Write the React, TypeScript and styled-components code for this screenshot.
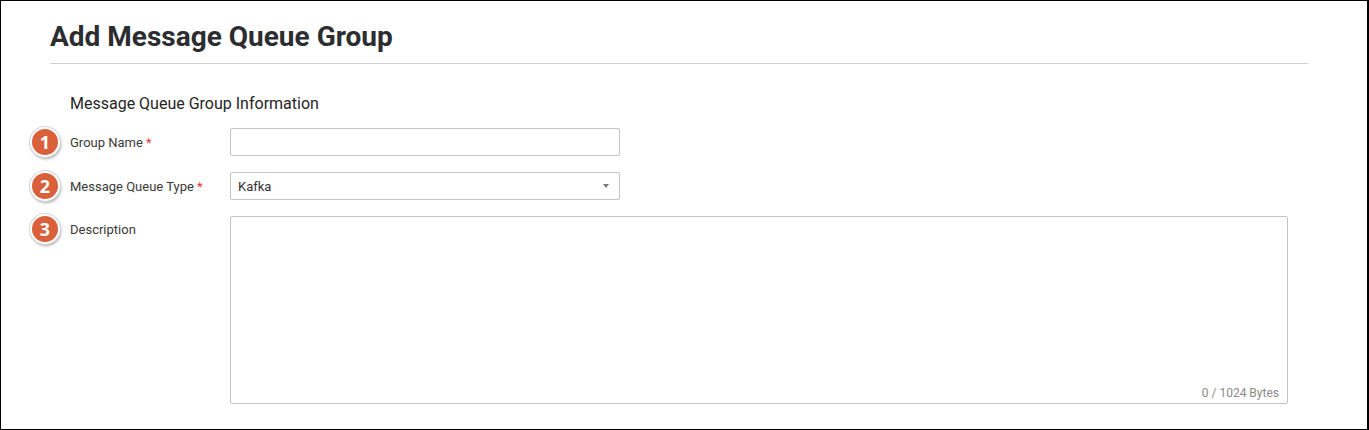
import styled, { createGlobalStyle } from 'styled-components'

const GlobalStyle = createGlobalStyle`
  html, body {
    margin: 0;
    padding: 0;
    background: #fff;
  }
  body {
    font-family: Roboto, "Liberation Sans", Arial, sans-serif;
    color: #333;
  }
`

const App: React.FC = () => {
  return (
    <>
      <GlobalStyle />
      <Frame>
        <Header>
          <Title>Add Message Queue Group</Title>
        </Header>
        <Section>
          <SectionTitle>Message Queue Group Information</SectionTitle>
          <Form>
            <Row>
              <LabelCell>
                <Badge>1</Badge>
                <Label>
                  Group Name <Req>*</Req>
                </Label>
              </LabelCell>
              <Input type="text" />
            </Row>
            <Row>
              <LabelCell>
                <Badge>2</Badge>
                <Label>
                  Message Queue Type <Req>*</Req>
                </Label>
              </LabelCell>
              <Select>
                <span>Kafka</span>
                <Caret />
              </Select>
            </Row>
            <Row>
              <LabelCell $top>
                <Badge>3</Badge>
                <Label>Description</Label>
              </LabelCell>
              <TextAreaWrap>
                <TextArea />
                <Counter>0 / 1024 Bytes</Counter>
              </TextAreaWrap>
            </Row>
          </Form>
        </Section>
      </Frame>
    </>
  )
}

export default App

const Frame = styled.div`
  width: 1369px;
  height: 430px;
  box-sizing: border-box;
  border: 1px solid #000;
  border-right-width: 2px;
  background: #fff;
  overflow: hidden;
`

const Header = styled.div`
  margin: 0 59px 0 49px;
  padding-top: 20px;
  padding-bottom: 10px;
  border-bottom: 1px solid #cfcfcf;
`

const Title = styled.h1`
  margin: 0;
  font-size: 28px;
  line-height: 32px;
  font-weight: 700;
  color: #2b2d31;
`

const Section = styled.div`
  padding: 30px 0 0 29px;
`

const SectionTitle = styled.h2`
  margin: 0 0 14px 40px;
  font-size: 16px;
  line-height: 20px;
  font-weight: 400;
  color: #262626;
`

const Form = styled.div`
  display: flex;
  flex-direction: column;
  gap: 16px;
`

const Row = styled.div`
  display: flex;
  align-items: flex-start;
`

const LabelCell = styled.div<{ $top?: boolean }>`
  width: 200px;
  height: 28px;
  display: flex;
  align-items: center;
  gap: 10px;
  margin-top: ${({ $top }) => ($top ? '-1px' : '0')};
`

const Badge = styled.div`
  width: 26px;
  height: 26px;
  flex: none;
  border-radius: 50%;
  background: #d9603b;
  border: 2px solid #fff;
  box-shadow: 0 0 0 1px #d6d6d6, 1px 2px 3px rgba(0, 0, 0, 0.35);
  color: #fff;
  font-family: "Open Sans", Roboto, sans-serif;
  font-weight: 700;
  font-size: 18px;
  line-height: 26px;
  text-align: center;
`

const Label = styled.span`
  font-size: 13px;
  color: #3a3a3a;
  white-space: nowrap;
`

const Req = styled.span`
  color: #e53935;
`

const Input = styled.input`
  width: 390px;
  height: 28px;
  box-sizing: border-box;
  border: 1px solid #c4c4c4;
  border-radius: 2px;
  padding: 0 8px;
  font: inherit;
  outline: none;
`

const Select = styled.div`
  width: 390px;
  height: 28px;
  box-sizing: border-box;
  border: 1px solid #c4c4c4;
  border-radius: 2px;
  padding: 0 10px 0 7px;
  display: flex;
  align-items: center;
  justify-content: space-between;
  font-size: 13px;
  color: #333;
`

const Caret = styled.span`
  width: 0;
  height: 0;
  border-left: 3.5px solid transparent;
  border-right: 3.5px solid transparent;
  border-top: 4px solid #7a7a7a;
`

const TextAreaWrap = styled.div`
  position: relative;
  width: 1058px;
  height: 188px;
`

const TextArea = styled.textarea`
  display: block;
  width: 100%;
  height: 100%;
  box-sizing: border-box;
  border: 1px solid #c4c4c4;
  border-radius: 2px;
  resize: none;
  outline: none;
  font: inherit;
`

const Counter = styled.span`
  position: absolute;
  right: 9px;
  bottom: 4px;
  font-size: 12px;
  color: #8a8a8a;
`
